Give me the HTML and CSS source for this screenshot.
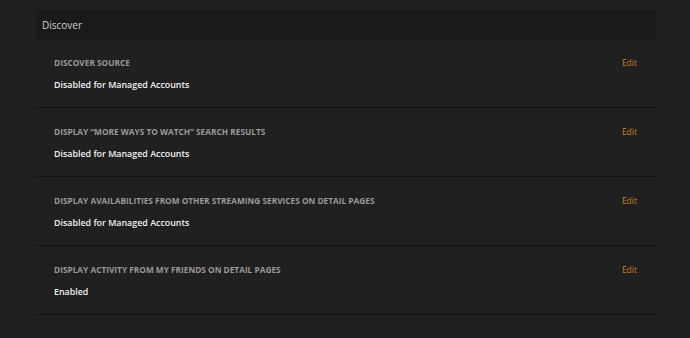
FILE: index.html
```html
<!DOCTYPE html>
<html lang="en">

<head>
    <meta charset="UTF-8">
    <meta name="viewport" content="width=device-width, initial-scale=1.0">
    <title>Discover Settings</title>
    <link rel="stylesheet" href="styles.css">
</head>

<body>
    <div class="section">
        <div class="section-title">Discover</div>

        <div class="setting">
            <div class="setting-info">
                <div class="setting-label">Discover Source</div>
                <div class="setting-value">Disabled for Managed Accounts</div>
            </div>
            <a href="#" class="edit-link">Edit</a>
        </div>

        <div class="setting">
            <div class="setting-info">
                <div class="setting-label">Display &ldquo;More Ways to Watch&rdquo; Search Results</div>
                <div class="setting-value">Disabled for Managed Accounts</div>
            </div>
            <a href="#" class="edit-link">Edit</a>
        </div>

        <div class="setting">
            <div class="setting-info">
                <div class="setting-label">Display Availabilities from other streaming services on detail pages</div>
                <div class="setting-value">Disabled for Managed Accounts</div>
            </div>
            <a href="#" class="edit-link">Edit</a>
        </div>

        <div class="setting">
            <div class="setting-info">
                <div class="setting-label">Display activity from my friends on detail pages</div>
                <div class="setting-value">Enabled</div>
            </div>
            <a href="#" class="edit-link">Edit</a>
        </div>
    </div>
</body>

</html>
```

FILE: styles.css
```css
body {
    margin: 0;
    padding: 10px 34px 0 36px;
    background-color: #202020;
    font-family: "Open Sans", "Liberation Sans", sans-serif;
}

.section-title {
    height: 27px;
    line-height: 27px;
    padding: 2px 0 0 6px;
    background-color: #1a1a1a;
    color: #cfcfcf;
    font-size: 10px;
}

.setting {
    display: flex;
    justify-content: space-between;
    align-items: flex-start;
    padding: 19px 19px 15px 18px;
    border-bottom: 1px solid #121212;
}

.setting-label {
    line-height: 10px;
    font-size: 8.3px;
    font-weight: 700;
    text-transform: uppercase;
    color: #9a9a9a;
}

.setting-value {
    margin-top: 10px;
    line-height: 14px;
    font-size: 8.9px;
    font-weight: 600;
    color: #f2f2f2;
}

.edit-link {
    line-height: 10px;
    font-size: 8.5px;
    color: #c8801f;
    text-decoration: none;
}
```
